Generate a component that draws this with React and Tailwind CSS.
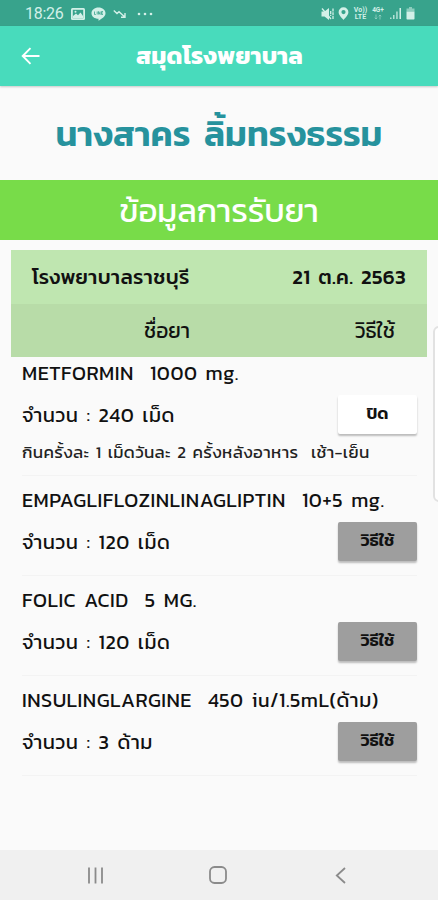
import React, { useState } from 'react';

const medicines = [
    {
        id: 1,
        name: 'METFORMIN  1000 mg.',
        amount: 'จำนวน : 240 เม็ด',
        usage: 'กินครั้งละ 1 เม็ดวันละ 2 ครั้งหลังอาหาร  เช้า-เย็น',
    },
    {
        id: 2,
        name: 'EMPAGLIFLOZINLINAGLIPTIN  10+5 mg.',
        amount: 'จำนวน : 120 เม็ด',
    },
    {
        id: 3,
        name: 'FOLIC ACID  5 MG.',
        amount: 'จำนวน : 120 เม็ด',
    },
    {
        id: 4,
        name: 'INSULINGLARGINE  450 iu/1.5mL(ด้าม)',
        amount: 'จำนวน : 3 ด้าม',
    },
];

const StatusBar = () => (
    <div className="flex h-[26px] items-center justify-between bg-[#38a38c] pl-[25px] pr-[23px] pt-px text-[#d3f0e8]">
        <div className="flex items-center">
            <span className="w-[38px] font-[Roboto] text-[16px] leading-none tracking-[-0.3px]">18:26</span>
            <svg className="ml-[8px]" width="14" height="12" viewBox="0 0 14 12">
                <rect width="14" height="12" rx="1.5" fill="currentColor" />
                <rect x="1.800" y="1.800" width="10.400" height="8.400" fill="#38a38c" />
                <path d="M2 10V8l3-2.500 2 1.800L9.500 4.500 12 8v2z" fill="currentColor" />
                <circle cx="4.500" cy="3.800" r="1" fill="currentColor" />
            </svg>
            <svg className="ml-[6px]" width="15" height="14" viewBox="0 0 15 14">
                <path d="M7.5 .5C11.500 .5 14.500 3 14.500 6.200c0 3.300-3.500 5.300-7 7.500v-2C3.500 11.700.5 9.500.5 6.200.5 3 3.500.5 7.500.5z" fill="currentColor" />
                <path d="M3.500 4.500v3h1.300M6.200 4.500v3M7.500 7.500v-3l1.600 3v-3M12 4.500h-1.500v3H12M10.500 6H12" fill="none" stroke="#38a38c" strokeWidth=".8" />
            </svg>
            <svg className="ml-[7px]" width="14" height="10" viewBox="0 0 14 10" fill="none" stroke="currentColor" strokeWidth="1.400">
                <path d="M.8 1.500l3.200 3 2-1.800 5.500 5M12 4v4.200H8" />
            </svg>
            <svg className="ml-[10px]" width="16" height="4" viewBox="0 0 16 4" fill="currentColor">
                <circle cx="2" cy="2" r="1.300" />
                <circle cx="8" cy="2" r="1.300" />
                <circle cx="14" cy="2" r="1.300" />
            </svg>
        </div>
        <div className="flex items-center">
            <svg width="13" height="14" viewBox="0 0 13 14">
                <path d="M.5 4.500h3l4.500-3.500v12l-4.500-3.500h-3z" fill="currentColor" />
                <path d="M1 1.500l9 10.500" stroke="currentColor" strokeWidth="1.300" />
                <path d="M9.700 4v5M12 1.500v11" stroke="currentColor" strokeWidth="1.300" strokeDasharray="3 .7" />
            </svg>
            <svg className="ml-[4px]" width="11" height="13" viewBox="0 0 11 13">
                <path fillRule="evenodd" d="M5.500.3a4.900 4.900 0 0 1 4.900 4.900c0 3-4.900 7.600-4.900 7.600S.6 8.200.6 5.200A4.900 4.900 0 0 1 5.500.3zm0 2.700a2.100 2.100 0 1 0 0 4.200 2.100 2.100 0 0 0 0-4.200z" fill="currentColor" />
            </svg>
            <div className="ml-[4px] flex w-[15px] flex-col items-center font-[Roboto] text-[7px] font-bold leading-[7px]">
                <span>Vo))</span>
                <span>LTE</span>
            </div>
            <div className="ml-[3px] flex w-[14px] flex-col items-center font-[Roboto] text-[6.500px] font-bold leading-[7px]">
                <span>4G+</span>
                <svg width="8" height="6" viewBox="0 0 8 6" fill="none" stroke="currentColor" strokeWidth=".8" opacity=".6">
                    <path d="M2 .5v4.500M.7 3.700L2 5l1.300-1.300M6 5.500V1M4.700 2.300L6 1l1.300 1.300" />
                </svg>
            </div>
            <svg className="ml-[4px]" width="13" height="13" viewBox="0 0 13 13" fill="currentColor">
                <path d="M1 10.500h1.500V12H1zM4 8h1.500v4H4zM7.200 4.500h1.500V12H7.200z" opacity=".8" />
                <path d="M10.500 1H12v11h-1.500z" />
            </svg>
            <svg className="ml-[4px]" width="9" height="13" viewBox="0 0 9 13">
                <path d="M3 0h3v1.500h2.500v3h-8v-3H3z" fill="currentColor" opacity=".55" />
                <path d="M.5 4.500h8v7.300a.8.800 0 0 1-.8.800H1.300a.8.800 0 0 1-.8-.8z" fill="currentColor" />
            </svg>
        </div>
    </div>
);

const AppBar = () => (
    <div className="relative z-10 flex h-[60px] items-center bg-[#48dbbc] pl-[21px] text-white shadow-[0_1px_2px_rgba(0,0,0,0.2)]">
        <button>
            <svg width="19" height="18" viewBox="0 0 19 18" fill="none" stroke="currentColor" strokeWidth="1.900">
                <path d="M18.500 9H2.200M9.500 1.200L1.700 9l7.800 7.800" />
            </svg>
        </button>
        <h1 className="flex-1 pr-[39px] text-center text-[24px] font-bold leading-none tracking-[0.2px]">สมุดโรงพยาบาล</h1>
    </div>
);

const MedicineRow = ({ medicine, open, onToggle }) => (
    <div className="ml-[22px] mr-[21px] border-b border-[#f3f3f3] pb-[14px]">
        <p className="h-[28px] whitespace-pre text-[20px] leading-[27px] tracking-[0.5px] [word-spacing:3px]">{medicine.name}</p>
        <div className="mt-[7px] flex h-[39px] items-center justify-between">
            <span className="text-[20px] tracking-[0.5px] [word-spacing:3px]">{medicine.amount}</span>
            <button
                onClick={onToggle}
                className={`h-[39px] w-[79px] rounded-[2px] pb-px text-[17px] font-semibold shadow-[0_2px_2px_rgba(0,0,0,0.25)] ${open ? 'bg-white' : 'bg-[#9e9e9e]'}`}
            >
                {open ? 'ปิด' : 'วิธีใช้'}
            </button>
        </div>
        {open && (
            <p className="mt-[6px] h-[21px] whitespace-pre text-[17px] leading-[25px] tracking-[0.35px] text-[#222] [word-spacing:2px]">
                {medicine.usage}
            </p>
        )}
    </div>
);

const NavBar = () => (
    <div className="flex h-[50px] items-center justify-between bg-[#f0f0f0] pl-[87px] pr-[92px] text-[#8b8b8b]">
        <svg width="17" height="17" viewBox="0 0 17 17" stroke="currentColor" strokeWidth="1.800">
            <path d="M2 .5v16M8.500 .5v16M15 .5v16" />
        </svg>
        <svg className="mr-[4px]" width="18" height="18" viewBox="0 0 18 18" fill="none" stroke="currentColor" strokeWidth="1.800">
            <rect x="1" y="1" width="16" height="16" rx="4.500" />
        </svg>
        <svg width="11" height="17" viewBox="0 0 11 17" fill="none" stroke="currentColor" strokeWidth="1.800">
            <path d="M10 1L1.800 8.500 10 16" />
        </svg>
    </div>
);

const App = () => {
    const [openId, setOpenId] = useState(1);

    return (
        <div className="relative flex h-[900px] w-[438px] flex-col overflow-hidden bg-[#fafafa] font-['Kanit','Prompt','Noto_Sans_Thai','Noto_Sans',sans-serif] text-[#111]">
            <StatusBar />
            <AppBar />
            <h2 className="flex h-[94px] items-center justify-center whitespace-pre text-[35px] font-semibold leading-none text-[#26929d] [word-spacing:6px]">นางสาคร ลิ้มทรงธรรม</h2>
            <div className="flex h-[60px] items-center justify-center bg-[#78dc49] text-[33px] leading-none tracking-[-0.1px] text-white">ข้อมูลการรับยา</div>

            <div className="ml-[11px] mt-[10px] w-[416px]">
                <div className="flex h-[54px] items-center justify-between bg-[#bfe6b0] pl-[21px] pr-[21px] pt-px text-[20.5px] font-medium tracking-[0.3px] [word-spacing:3px]">
                    <span>โรงพยาบาลราชบุรี</span>
                    <span>21 ต.ค. 2563</span>
                </div>
                <div className="flex h-[53px] items-center justify-between bg-[#b8dca8] pl-[133px] pr-[32px] text-[21px]">
                    <span>ชื่อยา</span>
                    <span>วิธีใช้</span>
                </div>
            </div>

            <div className="flex flex-1 flex-col gap-[11px] pt-[3px]">
                {medicines.map(medicine => (
                    <MedicineRow
                        key={medicine.id}
                        medicine={medicine}
                        open={openId === medicine.id}
                        onToggle={() => setOpenId(openId === medicine.id ? null : medicine.id)}
                    />
                ))}
            </div>

            <NavBar />

            {/* edge panel handle */}
            <div className="absolute right-[-8px] top-[326px] h-[176px] w-[13px] rounded-[6px] border-2 border-[#e2e2e2] bg-white" />
        </div>
    );
};

export default App;
